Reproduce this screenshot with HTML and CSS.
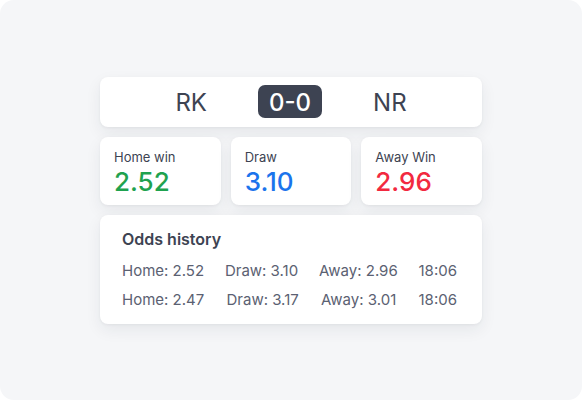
FILE: index.html
```html
<!DOCTYPE html>
<html lang="en">
<head>
<meta charset="utf-8">
<title>Match odds</title>
<link rel="stylesheet" href="styles.css">
</head>
<body>
<div class="stage">
  <div class="board">
    <div class="card scoreline">
      <span class="team">RK</span>
      <span class="score">0-0</span>
      <span class="team">NR</span>
    </div>
    <div class="odds">
      <div class="card odd">
        <div class="odd-label">Home win</div>
        <div class="odd-value home">2.52</div>
      </div>
      <div class="card odd">
        <div class="odd-label">Draw</div>
        <div class="odd-value draw">3.10</div>
      </div>
      <div class="card odd">
        <div class="odd-label">Away Win</div>
        <div class="odd-value away">2.96</div>
      </div>
    </div>
    <div class="card history">
      <div class="history-title">Odds history</div>
      <div class="history-rows">
        <div class="history-row">
          <span>Home: 2.52</span>
          <span>Draw: 3.10</span>
          <span>Away: 2.96</span>
          <span>18:06</span>
        </div>
        <div class="history-row">
          <span>Home: 2.47</span>
          <span>Draw: 3.17</span>
          <span>Away: 3.01</span>
          <span>18:06</span>
        </div>
      </div>
    </div>
  </div>
</div>
</body>
</html>
```

FILE: styles.css
```css
html, body {
  margin: 0;
  padding: 0;
  background: #ffffff;
}

body {
  font-family: Inter, "Noto Sans", "Liberation Sans", sans-serif;
  color: #3d4352;
}

.stage {
  width: 582px;
  height: 400px;
  background: #f5f6f8;
  border-radius: 14px;
  display: flex;
  align-items: center;
  justify-content: center;
}

.board {
  width: 382px;
  display: flex;
  flex-direction: column;
  gap: 10px;
}

.card {
  background: #ffffff;
  border-radius: 8px;
  box-shadow: 0 6px 16px rgba(30, 38, 60, 0.07), 0 1px 3px rgba(30, 38, 60, 0.05);
}

.scoreline {
  height: 50px;
  display: flex;
  align-items: center;
  justify-content: center;
  gap: 51px;
}

.team {
  font-size: 24px;
  line-height: 29px;
  padding-top: 2px;
  color: #3d4352;
}

.score {
  background: #3d4352;
  color: #ffffff;
  font-size: 24px;
  font-weight: 500;
  line-height: 29px;
  padding: 3px 11px 1px;
  border-radius: 7px;
}

.odds {
  display: grid;
  grid-template-columns: repeat(3, 1fr);
  gap: 10px;
}

.odd {
  height: 68px;
  box-sizing: border-box;
  padding: 12px 14px 7px;
}

.odd-label {
  font-size: 13px;
  line-height: 16px;
  color: #3d4352;
}

.odd-value {
  margin-top: 1px;
  font-size: 26px;
  line-height: 32px;
  font-weight: 500;
}

.home { color: #1fa24f; }
.draw { color: #1b74ec; }
.away { color: #f2293f; }

.history {
  padding: 14px 25px 14px 22px;
}

.history-title {
  font-size: 16px;
  line-height: 20px;
  font-weight: 600;
  color: #3d4352;
}

.history-rows {
  margin-top: 12px;
  display: flex;
  flex-direction: column;
  gap: 9px;
}

.history-row {
  display: flex;
  justify-content: space-between;
  font-size: 15px;
  line-height: 20px;
  color: #5b6172;
}
```
